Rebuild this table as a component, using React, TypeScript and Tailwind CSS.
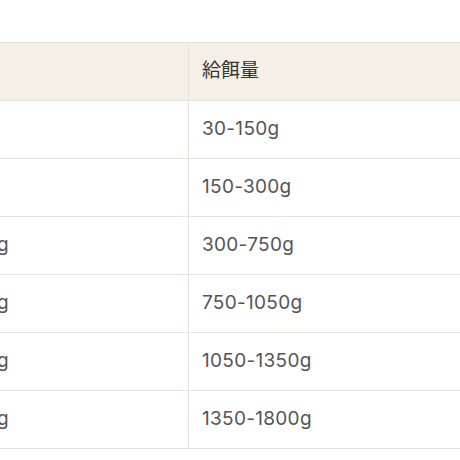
const rows = [
  { stage: "生後1ヶ月 1-3kg", amount: "30-150g", show: false },
  { stage: "生後2ヶ月 3-6kg", amount: "150-300g", show: false },
  { stage: "生後3ヶ月 6-15kg", amount: "300-750g", show: true },
  { stage: "生後4ヶ月 15-21kg", amount: "750-1050g", show: true },
  { stage: "生後5ヶ月 21-27kg", amount: "1050-1350g", show: true },
  { stage: "生後6ヶ月 27-36kg", amount: "1350-1800g", show: true },
];

export default function App() {
  return (
    <div
      className="h-[460px] w-[460px] overflow-hidden bg-white pt-[42px]"
      style={{ fontFamily: 'Inter, "Noto Sans CJK JP", sans-serif' }}
    >
      <table className="-ml-[212px] w-[912px] table-fixed border-collapse">
        <colgroup>
          <col className="w-[400px]" />
          <col className="w-[512px]" />
        </colgroup>
        <thead>
          <tr className="h-[58px] bg-[#f4f0e8]">
            <th className="border border-[#e6e2dc] px-[13px] text-left text-[19px] font-normal text-[#333]">
              月齢・体重
            </th>
            <th className="border border-[#e6e2dc] px-[13px] text-left text-[19px] font-normal text-[#333]">
              給餌量
            </th>
          </tr>
        </thead>
        <tbody>
          {rows.map((r) => (
            <tr key={r.amount} className="h-[58px]">
              <td className="border border-[#e6e2dc] text-[19px] tracking-[0.3px] text-[#555]">
                <div className={r.show ? "pr-[179px] text-right" : "pr-[210px] text-right"}>
                  {r.stage}
                </div>
              </td>
              <td className="border border-[#e6e2dc] px-[13px] text-[19px] tracking-[0.3px] text-[#555]">
                {r.amount}
              </td>
            </tr>
          ))}
        </tbody>
      </table>
    </div>
  );
}
